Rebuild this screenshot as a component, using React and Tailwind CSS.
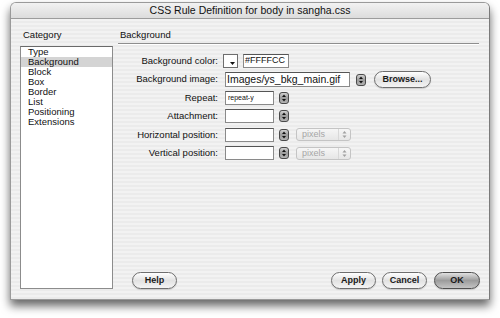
const font = { fontFamily: '"Liberation Sans", Arial, sans-serif' };

function Stepper() {
  return (
    <svg width="10" height="12" viewBox="0 0 10 12" className="shrink-0">
      <defs>
        <linearGradient id="stp" x1="0" y1="0" x2="0" y2="1">
          <stop offset="0" stopColor="#d8d8d8" />
          <stop offset="0.5" stopColor="#9a9a9a" />
          <stop offset="1" stopColor="#b8b8b8" />
        </linearGradient>
      </defs>
      <rect x="0.5" y="0.5" width="9" height="11" rx="2.5" fill="url(#stp)" stroke="#4a4a4a" />
      <path d="M3 5 L5 2.6 L7 5 Z" fill="#111" />
      <path d="M3 7 L5 9.4 L7 7 Z" fill="#111" />
    </svg>
  );
}

function Popup() {
  return (
    <div className="ml-[7px] flex h-[13px] w-[55px] items-center rounded-[3px] border border-[#c4c4c4] bg-linear-to-b from-[#f6f6f6] to-[#e6e6e6]">
      <span className="flex-1 pl-[5px] text-[9px] leading-none text-[#a6a6a6]">pixels</span>
      <span className="flex h-full w-[12px] items-center justify-center border-l border-[#d8d8d8]">
        <svg width="5" height="9" viewBox="0 0 5 9">
          <path d="M0.5 3.5 L2.5 1 L4.5 3.5 Z" fill="#a0a0a0" />
          <path d="M0.5 5.5 L2.5 8 L4.5 5.5 Z" fill="#a0a0a0" />
        </svg>
      </span>
    </div>
  );
}

function Field({ w, h = 14, children, className = "" }) {
  return (
    <div
      className={`flex items-center border border-[#8a8a8a] border-t-[#555] bg-white ${className}`}
      style={{ width: w, height: h }}
    >
      {children}
    </div>
  );
}

function Button({ children, w, dark }) {
  return (
    <div
      className={`flex h-[17px] items-center justify-center rounded-full border text-[9px] font-bold text-[#1a1a1a] shadow-[0_1px_1px_rgba(0,0,0,0.15)] ${
        dark
          ? "border-[#4f4f4f] bg-linear-to-b from-[#e2e2e2] via-[#9c9c9c] to-[#c4c4c4]"
          : "border-[#6e6e6e] bg-linear-to-b from-[#ffffff] via-[#e2e2e2] to-[#f4f4f4]"
      }`}
      style={{ width: w }}
    >
      {children}
    </div>
  );
}

function Row({ label, children }) {
  return (
    <div className="flex h-[18.4px] items-center">
      <span className="w-[100px] text-right text-[9.5px] text-[#111]">{label}</span>
      <div className="ml-[5px] flex items-center">{children}</div>
    </div>
  );
}

const categories = ["Type", "Background", "Block", "Box", "Border", "List", "Positioning", "Extensions"];

export default function App() {
  return (
    <div className="h-[318px] w-[500px] overflow-hidden bg-white pl-[10px] pt-[2px]" style={font}>
      <div className="flex h-[298px] w-[480px] flex-col overflow-hidden rounded-t-[6px] border border-[#9a9a9a] border-r-[#7a7a7a] shadow-[0_6px_10px_rgba(0,0,0,0.6)] bg-[repeating-linear-gradient(0deg,#ebebeb_0px,#ebebeb_2px,#f2f2f2_2px,#f2f2f2_4px)]">
        {/* title bar */}
        <div className="flex h-[16px] shrink-0 items-center justify-center border-b border-[#9c9c9c] bg-linear-to-b from-[#f2f2f2] to-[#dcdcdc] text-[10.5px] text-[#111]">
          CSS Rule Definition for body in sangha.css
        </div>

        <div className="flex flex-1">
          {/* category column */}
          <div className="flex w-[102px] flex-col pb-[10px] pl-[9px] pt-[10px]">
            <div className="ml-[3px] h-[12px] text-[9.5px] leading-[12px] text-[#111]">Category</div>
            <div className="mt-[5px] flex-1 border border-[#8c8c8c] border-t-[#6a6a6a] bg-white">
              {categories.map((c) => (
                <div
                  key={c}
                  className={`h-[10px] pl-[7px] text-[9.5px] leading-[10px] text-[#111] ${
                    c === "Background" ? "bg-[#d4d4d4]" : ""
                  }`}
                >
                  {c}
                </div>
              ))}
            </div>
          </div>

          {/* right panel */}
          <div className="flex flex-1 flex-col pl-[5px] pr-[10px] pt-[10px]">
            <div className="h-[15px] border-b border-[#8e8e8e] pl-[2px] text-[9.5px] leading-[12px] text-[#111] shadow-[0_1px_0_#ffffff]">
              Background
            </div>

            <div className="mt-[8px] flex flex-col">
              <Row label="Background color:">
                <div className="relative h-[14px] w-[15px] border border-[#6e6e6e] bg-white">
                  <svg width="5" height="3" viewBox="0 0 5 3" className="absolute bottom-[2px] right-[2px]">
                    <path d="M0 0 L5 0 L2.5 3 Z" fill="#111" />
                  </svg>
                </div>
                <Field w={46} className="ml-[5px]">
                  <span className="pl-[1px] text-[9px] text-[#111]">#FFFFCC</span>
                </Field>
              </Row>
              <Row label="Background image:">
                <Field w={125} h={15} className="ml-[2px] overflow-hidden">
                  <span className="whitespace-nowrap pl-[1px] text-[10.5px] text-[#111]">Images/ys_bkg_main.gif</span>
                </Field>
                <div className="ml-[6px]">
                  <Stepper />
                </div>
                <div className="ml-[8px]">
                  <Button w={57}>Browse...</Button>
                </div>
              </Row>
              <Row label="Repeat:">
                <Field w={49} className="ml-[2px]">
                  <span className="pl-[2px] text-[7px] text-[#111]">repeat-y</span>
                </Field>
                <div className="ml-[5px]">
                  <Stepper />
                </div>
              </Row>
              <Row label="Attachment:">
                <Field w={49} className="ml-[2px]" />
                <div className="ml-[5px]">
                  <Stepper />
                </div>
              </Row>
              <Row label="Horizontal position:">
                <Field w={49} className="ml-[2px]" />
                <div className="ml-[5px]">
                  <Stepper />
                </div>
                <Popup />
              </Row>
              <Row label="Vertical position:">
                <Field w={49} className="ml-[2px]" />
                <div className="ml-[5px]">
                  <Stepper />
                </div>
                <Popup />
              </Row>
            </div>

            <div className="mb-[10px] mt-auto flex items-center pl-[14px]">
              <Button w={45}>Help</Button>
              <div className="flex-1" />
              <Button w={45}>Apply</Button>
              <div className="ml-[6px]">
                <Button w={45}>Cancel</Button>
              </div>
              <div className="-mr-px ml-[7px]">
                <Button w={46} dark>
                  OK
                </Button>
              </div>
            </div>
          </div>
        </div>
      </div>
    </div>
  );
}
